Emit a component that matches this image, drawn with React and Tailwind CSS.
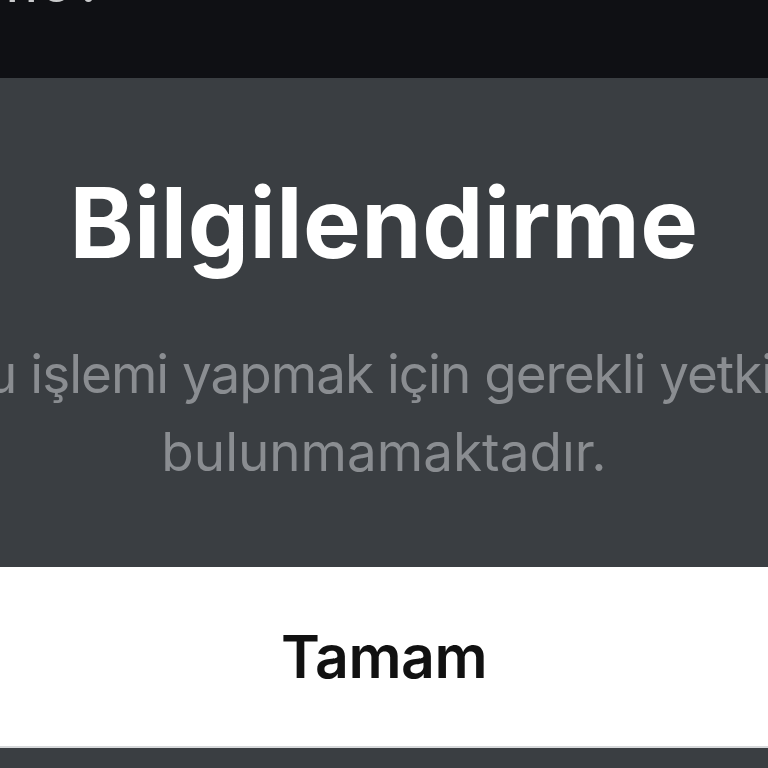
import React from "react";

const font = { fontFamily: "Inter, 'Noto Sans', sans-serif" };

export default function App() {
  return (
    <div
      className="w-[768px] h-[768px] overflow-hidden flex flex-col bg-[#3a3e42]"
      style={font}
    >
      {/* Top bar with cut-off text */}
      <div className="h-[78px] shrink-0 bg-[#0f1014] overflow-hidden">
        <p className="-mt-[50px] -ml-[14px] text-[60px] leading-[60px] text-[#c9cacc] whitespace-nowrap">
          mo?
        </p>
      </div>

      {/* Dialog body */}
      <div className="h-[489px] shrink-0 flex flex-col items-center overflow-hidden">
        <h1 className="mt-[97px] text-[97px] leading-[96px] font-bold text-white tracking-[0.5px] whitespace-nowrap">
          Bilgilendirme
        </h1>
        <div className="mt-[64px] w-[1400px] text-center text-[53px] leading-[78px] text-[#8a8d91] font-normal">
          <p className="whitespace-nowrap pl-[28px] tracking-[-1px]">Bu işlemi yapmak için gerekli yetkiniz</p>
          <p className="whitespace-nowrap">bulunmamaktadır.</p>
        </div>
      </div>

      {/* Button */}
      <button className="h-[181px] shrink-0 bg-white border-b-2 border-[#d6d8da] flex items-center justify-center">
        <span className="text-[59px] leading-none font-semibold text-[#111111] tracking-[-0.5px]">
          Tamam
        </span>
      </button>

      <div className="flex-1 bg-[#3a3e42]" />
    </div>
  );
}
